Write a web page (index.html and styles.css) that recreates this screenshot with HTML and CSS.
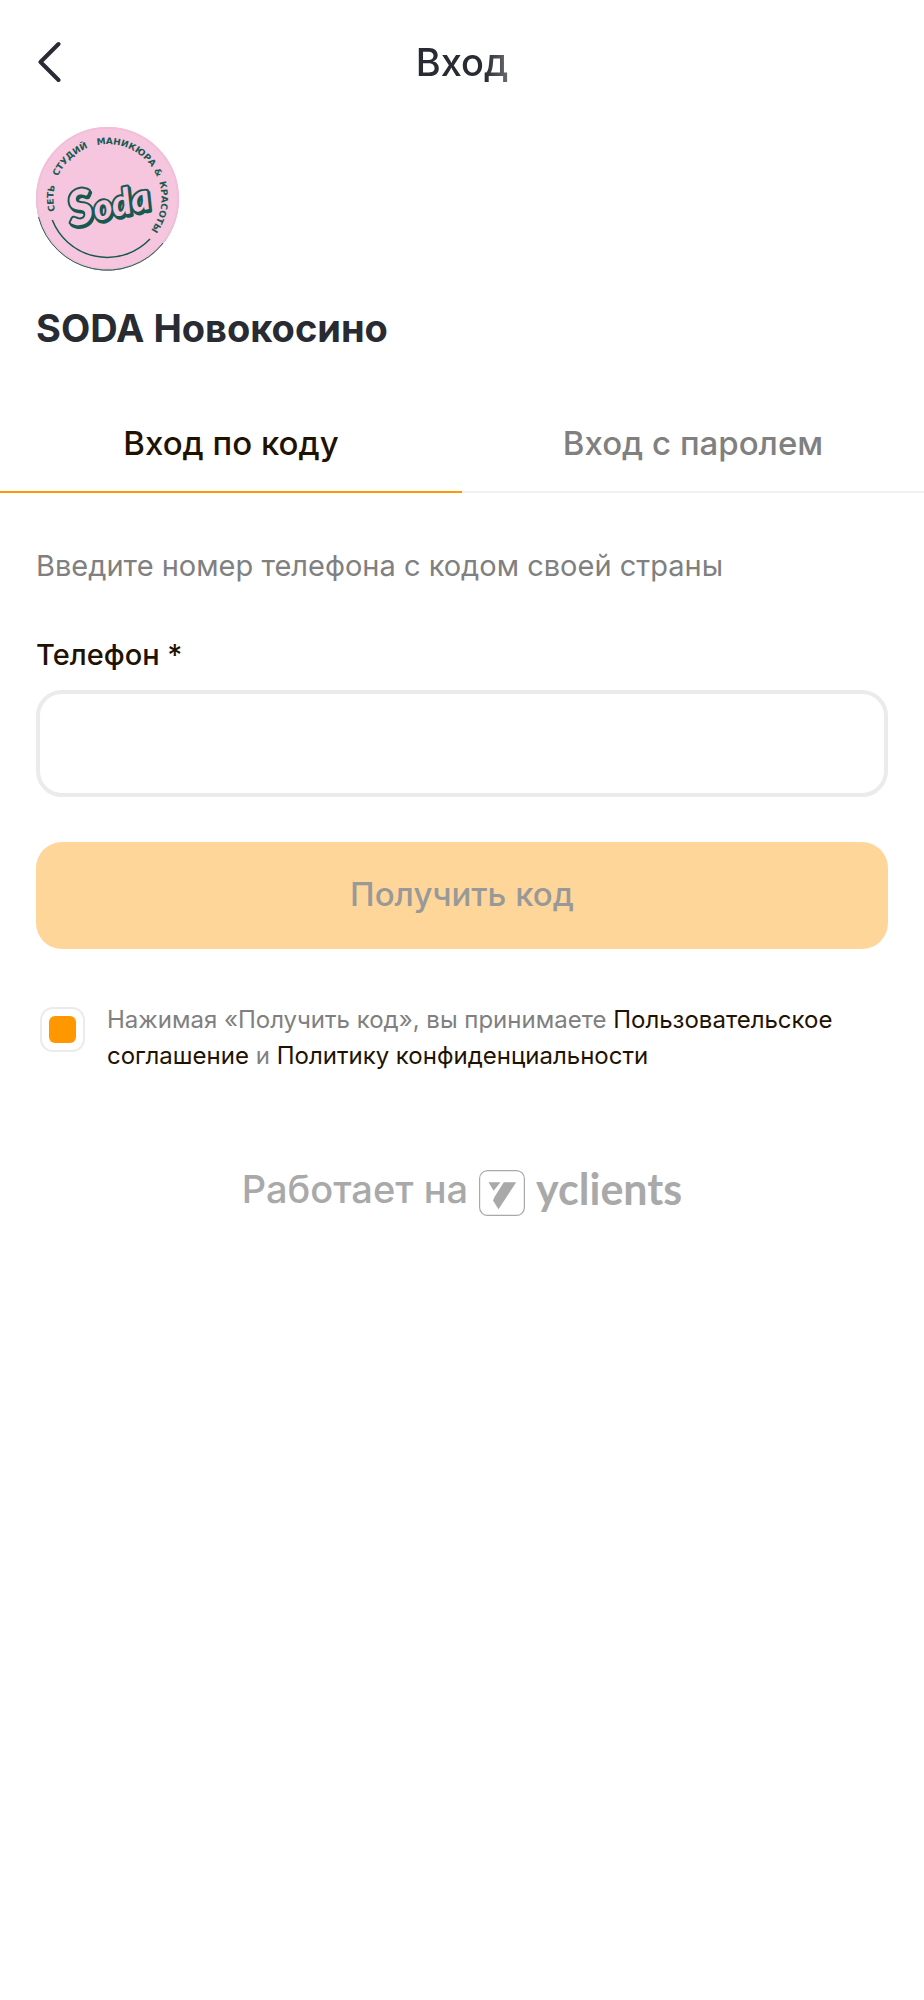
FILE: index.html
```html
<!DOCTYPE html>
<html lang="ru">
<head>
<meta charset="utf-8">
<meta name="viewport" content="width=device-width, initial-scale=1">
<title>Вход</title>
<link rel="stylesheet" href="styles.css">
</head>
<body>
<header class="header">
  <button class="back" type="button" aria-label="Назад">
    <svg width="28" height="44" viewBox="0 0 28 44" fill="none" stroke="currentColor" stroke-width="4" stroke-linecap="round" stroke-linejoin="round"><path d="M20.500 4 2.500 22l18 18"/></svg>
  </button>
  <h1 class="title">Вход</h1>
</header>
<main>
  <section class="company">
    <svg class="logo" viewBox="0 0 143 143" role="img" aria-label="Soda">
      <defs><path id="ring" d="M20.100 87.800A54 54 0 1 1 110 109"/></defs>
      <circle cx="71.500" cy="72.500" r="71" fill="#2b6058"/>
      <circle cx="71.500" cy="71.500" r="71.500" fill="#f6c6df"/>
      <circle cx="71.500" cy="71.500" r="70.500" fill="none" stroke="#f1bfd8" stroke-width="2"/>
      <path d="M2.500 90A71 71 0 0 0 127 116" fill="none" stroke="#2b6058"/>
      <g class="ring-text">
        <text><textPath href="#ring" startOffset="4">СЕТЬ</textPath></text>
        <text><textPath href="#ring" startOffset="39">СТУДИЙ</textPath></text>
        <text><textPath href="#ring" startOffset="91">МАНИКЮРА</textPath></text>
        <text><textPath href="#ring" startOffset="157">&amp;</textPath></text>
        <text><textPath href="#ring" startOffset="170">КРАСОТЫ</textPath></text>
      </g>
      <path d="M16.300 93A59 59 0 0 0 114 112" fill="none" stroke="#17594f" stroke-width="1.500"/>
      <g transform="rotate(-13 72 75)">
        <text class="soda soda-shadow" x="32" y="93"><tspan class="soda-cap">S</tspan>oda</text>
        <text class="soda" x="31" y="91"><tspan class="soda-cap">S</tspan>oda</text>
      </g>
    </svg>
    <h2 class="name">SODA Новокосино</h2>
  </section>
  <div class="tabs" role="tablist">
    <button class="tab tab-active" type="button" role="tab" aria-selected="true">Вход по коду</button>
    <button class="tab" type="button" role="tab" aria-selected="false">Вход с паролем</button>
  </div>
  <form class="form">
    <p class="hint">Введите номер телефона с кодом своей страны</p>
    <label class="label" for="phone">Телефон *</label>
    <input class="phone" id="phone" type="tel">
    <button class="submit" type="submit" disabled>Получить код</button>
    <div class="terms">
      <input class="check" id="agree" type="checkbox" checked>
      <label for="agree">Нажимая «Получить код», вы принимаете <a href="#">Пользовательское соглашение</a> и <a href="#">Политику конфиденциальности</a></label>
    </div>
  </form>
</main>
<footer class="powered">
  <span>Работает на</span>
  <svg class="mark" width="46" height="46" viewBox="0 0 46 46"><rect x=".6" y=".6" width="44.800" height="44.800" rx="8" fill="none" stroke="currentColor" stroke-width="1.200"/><path d="M9.500 12.300H21.500L14.600 20.700ZM24.800 12.300H37.200L19.500 39.200 14 30.500 15.500 27Z" fill="currentColor"/></svg>
  <span class="wordmark">yclients</span>
</footer>
</body>
</html>
```
FILE: styles.css
```css
* { box-sizing: border-box; }

body {
  margin: 0;
  background: #fff;
  color: #1f1300;
  font-family: Inter, "Liberation Sans", sans-serif;
}

button, input { font: inherit; margin: 0; }

h1, h2, p { margin: 0; }

.header {
  display: grid;
  grid-template-columns: 68px 1fr 68px;
  align-items: center;
  height: 127px;
  padding-bottom: 3px;
  color: #292b33;
}

.back {
  display: flex;
  padding: 0 0 0 38px;
  border: 0;
  background: none;
  color: inherit;
}

.back svg { flex: none; }

.title {
  justify-self: center;
  font-size: 38px;
  font-weight: 500;
  line-height: 48px;
  -webkit-mask-image: linear-gradient(to right, #000 75%, rgba(0, 0, 0, .7));
  mask-image: linear-gradient(to right, #000 75%, rgba(0, 0, 0, .7));
}

.company {
  padding: 0 36px;
  color: #292b33;
}

.logo {
  display: block;
  width: 143px;
  height: 143px;
  overflow: visible;
}

.ring-text {
  fill: #17594f;
  font: bold 9px "DejaVu Sans", sans-serif;
}

.soda {
  fill: #f6c6df;
  stroke: #17594f;
  stroke-width: 4px;
  stroke-linejoin: round;
  paint-order: stroke;
  font: italic 900 36px Lato, sans-serif;
}

.soda-shadow { fill: #17594f; }

.soda-cap { font-size: 48px; }

.name {
  margin-top: 34px;
  font-size: 38px;
  font-weight: 700;
  line-height: 48px;
}

.tabs {
  display: grid;
  grid-template-columns: 1fr 1fr;
  margin-top: 41px;
}

.tab {
  height: 100px;
  padding: 2px 0 0;
  border: 0;
  border-bottom: 2px solid #f2f2f2;
  background: none;
  color: #808080;
  font-size: 33px;
  font-weight: 500;
}

.tab-active {
  border-color: #ff9800;
  color: #1f1300;
}

.form {
  display: flex;
  flex-direction: column;
  padding: 55px 36px 0;
}

.hint {
  color: #808080;
  font-size: 29px;
  line-height: 36px;
}

.label {
  margin-top: 53px;
  font-size: 29px;
  font-weight: 500;
  line-height: 36px;
}

.phone {
  width: 100%;
  height: 107px;
  margin-top: 17px;
  padding: 0 28px;
  border: 4px solid #ebebeb;
  border-radius: 26px;
  background: #fff;
  font-size: 33px;
}

.submit {
  height: 107px;
  margin-top: 45px;
  padding: 0 0 4px;
  border: 0;
  border-radius: 26px;
  background: #ffd699;
  color: #999;
  font-size: 33px;
  font-weight: 500;
}

.terms {
  display: flex;
  align-items: flex-start;
  gap: 22px;
  margin-top: 53px;
  padding-left: 4px;
  color: #808080;
  font-size: 24px;
  line-height: 36px;
}

.terms a {
  color: #1f1300;
  text-decoration: none;
}

.check {
  flex: none;
  appearance: none;
  width: 45px;
  height: 45px;
  margin-top: 5px;
  padding: 7px;
  border: 2px solid #ebebeb;
  border-radius: 13px;
}

.check:checked::before {
  content: "";
  display: block;
  height: 100%;
  border-radius: 6px;
  background: #ff9800;
}

.powered {
  display: flex;
  justify-content: center;
  align-items: center;
  gap: 11px;
  margin-top: 88px;
  color: #a9a9a9;
  font-size: 38px;
  font-weight: 500;
  line-height: 48px;
}

.mark {
  flex: none;
  margin-top: 8px;
}

.wordmark {
  font-family: Lato, sans-serif;
  font-size: 43px;
  font-weight: 700;
}
```
